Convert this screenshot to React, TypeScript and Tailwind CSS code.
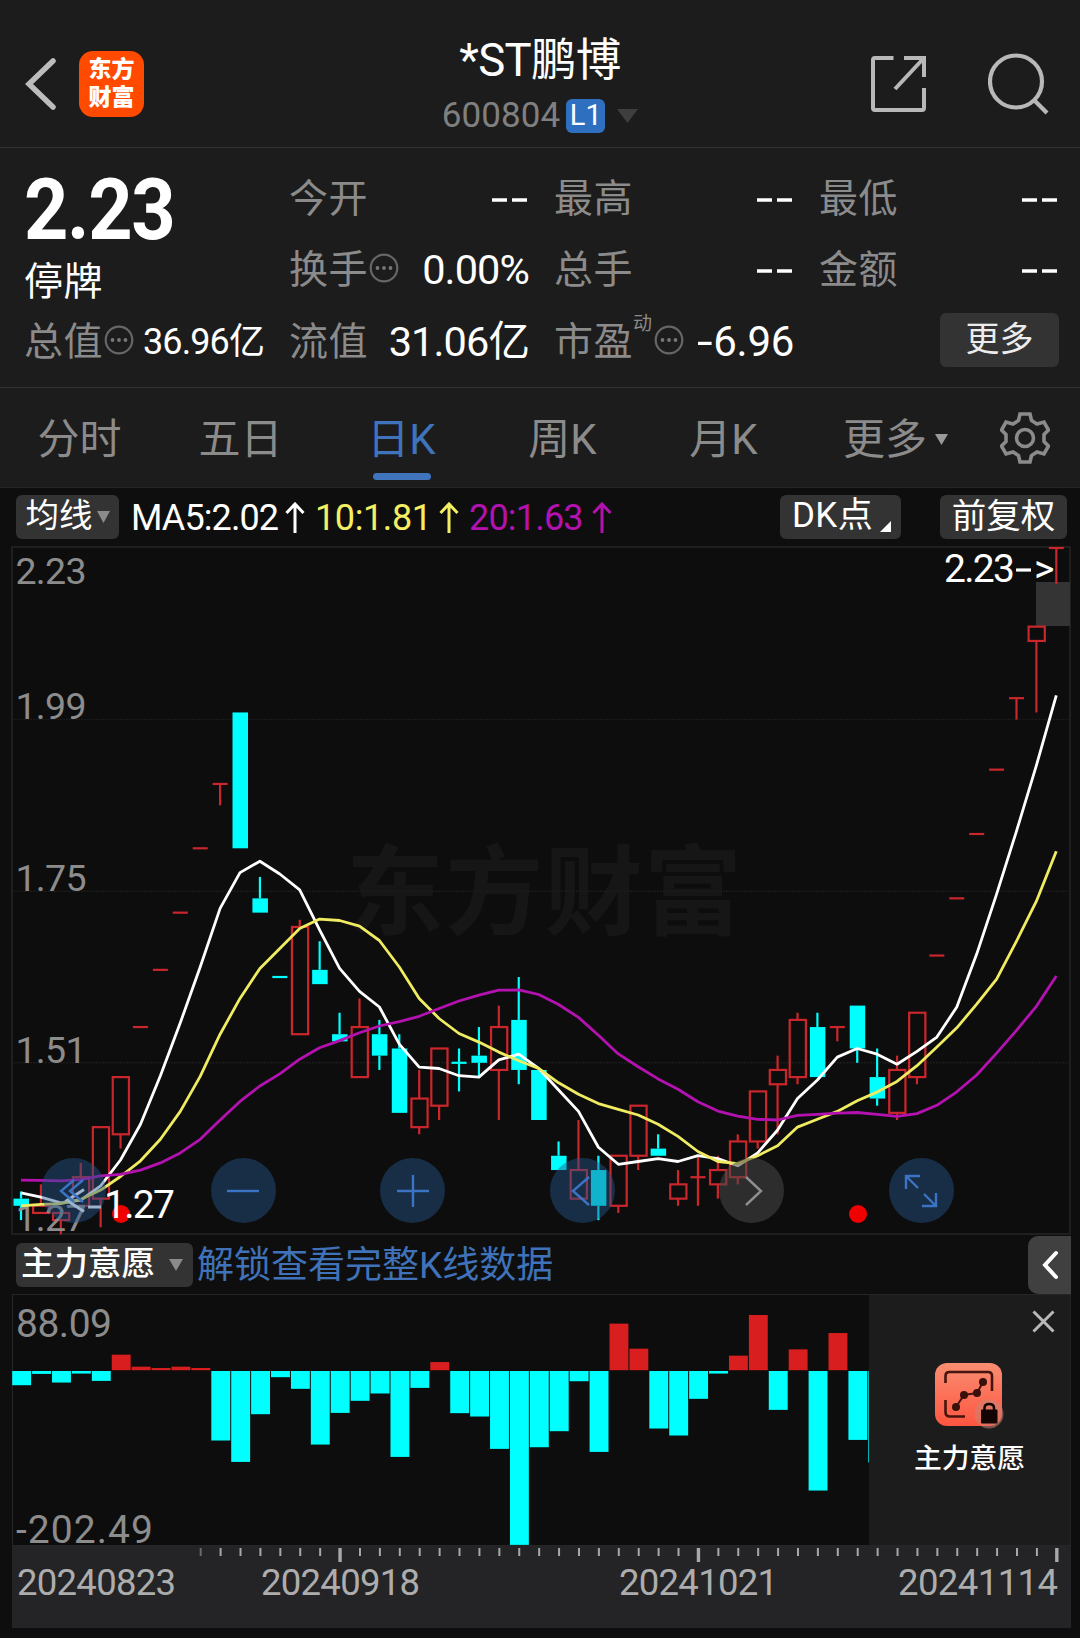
import type { ReactNode } from "react";

const RED = "#cb262c";
const CYAN = "#00ffff";

// closes before the first visible candle, needed by the moving averages
const history = [
  1.32, 1.31, 1.32, 1.31, 1.45, 1.44, 1.44, 1.44, 1.43, 1.36, 1.29, 1.29, 1.29,
  1.29, 1.3, 1.34, 1.34, 1.33, 1.32,
];

// [open, close, high, low]
const candles = [
  [1.32, 1.31, 1.33, 1.29],
  [1.3, 1.31, 1.34, 1.3],
  [1.29, 1.3, 1.3, 1.27],
  [1.31, 1.35, 1.37, 1.31],
  [1.32, 1.42, 1.42, 1.28],
  [1.41, 1.49, 1.49, 1.39],
  [1.56, 1.56, 1.56, 1.56],
  [1.64, 1.64, 1.64, 1.64],
  [1.72, 1.72, 1.72, 1.72],
  [1.81, 1.81, 1.81, 1.81],
  [1.9, 1.9, 1.9, 1.87],
  [2.0, 1.81, 2.0, 1.81],
  [1.74, 1.72, 1.77, 1.72],
  [1.63, 1.63, 1.63, 1.63],
  [1.55, 1.7, 1.71, 1.55],
  [1.64, 1.62, 1.68, 1.62],
  [1.55, 1.54, 1.58, 1.54],
  [1.49, 1.56, 1.6, 1.49],
  [1.55, 1.52, 1.57, 1.5],
  [1.53, 1.44, 1.55, 1.44],
  [1.42, 1.46, 1.5, 1.41],
  [1.45, 1.53, 1.53, 1.43],
  [1.51, 1.51, 1.53, 1.47],
  [1.52, 1.51, 1.56, 1.49],
  [1.5, 1.56, 1.59, 1.43],
  [1.57, 1.5, 1.63, 1.48],
  [1.5, 1.43, 1.5, 1.43],
  [1.38, 1.36, 1.4, 1.36],
  [1.32, 1.36, 1.43, 1.32],
  [1.36, 1.31, 1.38, 1.29],
  [1.31, 1.38, 1.38, 1.3],
  [1.38, 1.45, 1.45, 1.36],
  [1.39, 1.38, 1.41, 1.38],
  [1.32, 1.34, 1.36, 1.31],
  [1.35, 1.35, 1.38, 1.31],
  [1.34, 1.36, 1.38, 1.32],
  [1.35, 1.4, 1.41, 1.34],
  [1.4, 1.47, 1.47, 1.39],
  [1.48, 1.5, 1.52, 1.41],
  [1.49, 1.57, 1.58, 1.48],
  [1.56, 1.49, 1.58, 1.49],
  [1.56, 1.56, 1.56, 1.54],
  [1.59, 1.53, 1.59, 1.51],
  [1.49, 1.46, 1.53, 1.45],
  [1.44, 1.5, 1.52, 1.43],
  [1.49, 1.58, 1.58, 1.48],
  [1.66, 1.66, 1.66, 1.66],
  [1.74, 1.74, 1.74, 1.74],
  [1.83, 1.83, 1.83, 1.83],
  [1.92, 1.92, 1.92, 1.92],
  [2.02, 2.02, 2.02, 1.99],
  [2.1, 2.12, 2.12, 2.0],
  [2.23, 2.23, 2.23, 2.18],
];

const force = [
  -17.4, -4.3, -14.3, -3.9, -12.4, 18.9, 5, 3.5, 5, 3.5, -81.5, -106.3, -51,
  -8.1, -21.6, -86.2, -49.5, -35.5, -27, -100.5, -20.5, 10.4, -49.8, -53.7,
  -91.2, -202.49, -89.3, -70.7, -12.8, -94.7, 54.9, 25.9, -67.6, -75.7, -33.2,
  -3.9, 17.8, 64.9, -46, 25.1, -139.5, 44, -80.8, -107,
];

const STEP = 19.91;
const px = (i: number) => 9 + STEP * i;
const py = (price: number) => 1 + (2.23 - price) * 715;

const closes = [...history, ...candles.map((c) => c[1])];

function maPoints(n: number) {
  return candles
    .map((_, i) => {
      const end = i + history.length + 1;
      const sum = closes.slice(end - n, end).reduce((a, b) => a + b, 0);
      return `${px(i).toFixed(1)},${py(sum / n).toFixed(1)}`;
    })
    .join(" ");
}

function Candle({ i }: { i: number }) {
  const [open, close, high, low] = candles[i];
  const prev = closes[i + history.length - 1];
  const up = close === open ? close > prev : close > open;
  const color = up ? RED : CYAN;
  const x = px(i);
  const top = py(Math.max(open, close));
  const bottom = py(Math.min(open, close));

  return (
    <g stroke={color} strokeWidth={2.2} fill="none">
      {high > Math.max(open, close) && <path d={`M${x} ${py(high)}V${top}`} />}
      {low < Math.min(open, close) && <path d={`M${x} ${bottom}V${py(low)}`} />}
      {open === close ? (
        <path d={`M${x - 7.5} ${top}h15`} />
      ) : up ? (
        <rect x={x - 7.8} y={top} width={16.2} height={bottom - top} />
      ) : (
        <rect x={x - 7.5} y={top} width={15.5} height={bottom - top} fill={color} stroke="none" />
      )}
    </g>
  );
}

function CircleButton({ gray, children }: { gray?: boolean; children: ReactNode }) {
  return (
    <button
      className={`flex h-[65px] w-[65px] items-center justify-center rounded-full ${
        gray ? "bg-[#484848]/55" : "bg-[#26548c]/45"
      }`}
    >
      <svg
        width="40"
        height="40"
        viewBox="0 0 40 40"
        fill="none"
        stroke={gray ? "#8e8e8e" : "#3b74c4"}
        strokeWidth="2.4"
      >
        {children}
      </svg>
    </button>
  );
}

function KLineChart() {
  return (
    <div className="relative ml-3 h-[687px] w-[1058px]">
      <svg className="block overflow-visible" width="1058" height="687" viewBox="0 0 1058 687">
        <rect x="0" y="0" width="1058" height="687" fill="#0d0d0d" stroke="#262626" strokeWidth="1.5" />
        <text
          x="532"
          y="380"
          fontSize="98"
          fontWeight="700"
          textAnchor="middle"
          fill="#161616"
          textLength="396"
        >
          东方财富
        </text>
        {[1.99, 1.75, 1.51].map((p) => (
          <path key={p} d={`M0 ${py(p)}H1058`} stroke="#1b1b1b" strokeWidth="1.5" strokeDasharray="2 1" />
        ))}
        <rect x="1024" y="35" width="34" height="44" fill="#343434" />
        {candles.map((_, i) => (
          <Candle key={i} i={i} />
        ))}
        <g fill="#8c8c8c" fontSize="37.500">
          <text x="3.500" y="36.500" textLength="71">2.23</text>
          <text x="3.500" y="171.500" textLength="71">1.99</text>
          <text x="3.500" y="344" textLength="71">1.75</text>
          <text x="3.500" y="515.500" textLength="71">1.51</text>
          <text x="3.500" y="683.500" textLength="71">1.27</text>
        </g>
        <g fill="none" strokeWidth="2.8" strokeLinejoin="round">
          <polyline points={maPoints(5)} stroke="#ffffff" />
          <polyline points={maPoints(10)} stroke="#f0ec62" />
          <polyline points={maPoints(20)} stroke="#b412b0" />
        </g>
        <circle cx="109" cy="667" r="9" fill="#f00000" />
        <circle cx="846" cy="667" r="9" fill="#f00000" />
        <path d="M72 642.500L55 653.500L72 664.500M76 660H89" stroke="#fff" strokeWidth="3" fill="none" />
        <g fill="#ffffff" fontSize="39">
          <text x="92" y="671" textLength="71">1.27</text>
          <text x="932" y="35" textLength="71">2.23</text>
          <text x="1022" y="35">&gt;</text>
        </g>
        <path d="M1004 23H1019" stroke="#fff" strokeWidth="3.200" />
      </svg>
      <div className="absolute top-[611px] left-[29px] flex w-[913px] justify-between">
        <CircleButton>
          <path d="M20 9L7 20L20 31M29 9L16 20L29 31" />
        </CircleButton>
        <CircleButton>
          <path d="M4 20H36" />
        </CircleButton>
        <CircleButton>
          <path d="M4 20H36M20 4V36" />
        </CircleButton>
        <CircleButton>
          <path d="M27 6L11 20L27 34" />
        </CircleButton>
        <CircleButton gray>
          <path d="M14 6L29 20L14 34" />
        </CircleButton>
        <CircleButton>
          <path d="M5 18V5H19M5 5L17 17M35 22V35H21M35 35L23 23" />
        </CircleButton>
      </div>
    </div>
  );
}

function ForceChart() {
  const scale = 0.8627;
  const zero = 76;
  return (
    <svg className="block h-[250px] w-[856px] overflow-visible" viewBox="0 0 856 250">
      {force.map((v, i) => (
        <rect
          key={i}
          x={-0.8 + STEP * i}
          y={v > 0 ? zero - v * scale : zero}
          width={i === force.length - 1 ? 1.3 : 18.9}
          height={Math.abs(v) * scale - 0.8}
          fill={v > 0 ? "#d81e1e" : CYAN}
        />
      ))}
      <g fill="#8c8c8c" fontSize="39">
        <text x="3" y="42" textLength="96">88.09</text>
        <text x="3" y="248" textLength="137">-202.49</text>
      </g>
    </svg>
  );
}

function MoreDot() {
  return (
    <svg className="-mt-1 ml-px shrink-0" width="30" height="30" viewBox="0 0 30 30">
      <circle cx="15" cy="15" r="13.300" fill="none" stroke="#666" strokeWidth="2.200" />
      <g fill="#777">
        <circle cx="8.500" cy="15" r="1.900" />
        <circle cx="15" cy="15" r="1.900" />
        <circle cx="21.500" cy="15" r="1.900" />
      </g>
    </svg>
  );
}

function Quote({ label, value, dot }: { label: string; value: string; dot?: boolean }) {
  return (
    <div className="flex h-[71.5px] items-center">
      <span className="text-[39px] tracking-[0.5px] text-[#8b8b8b]">{label}</span>
      {dot && <MoreDot />}
      <span className="-mr-0.5 ml-auto text-[41.5px] tracking-[-0.9px] whitespace-nowrap text-white">{value}</span>
    </div>
  );
}

function Dashes() {
  return (
    <svg className="mt-0.5 -mr-px ml-auto" width="36" height="6" viewBox="0 0 36 6">
      <path d="M0 3H15M20 3H35" stroke="#fff" strokeWidth="3.600" />
    </svg>
  );
}

function EmptyQuote({ label }: { label: string }) {
  return (
    <div className="flex h-[71.5px] items-center">
      <span className="text-[39px] tracking-[0.5px] text-[#8b8b8b]">{label}</span>
      <Dashes />
    </div>
  );
}

function Triangle({ w, h, color }: { w: number; h: number; color: string }) {
  return (
    <svg className="shrink-0" width={w} height={h} viewBox="0 0 10 10" preserveAspectRatio="none">
      <path d="M0 0H10L5 10Z" fill={color} />
    </svg>
  );
}

function UpArrow({ color }: { color: string }) {
  return (
    <svg className="shrink-0" width="20" height="32" viewBox="0 0 20 32" fill="none" stroke={color} strokeWidth="3">
      <path d="M10 31V2M1.500 11L10 2L18.500 11" />
    </svg>
  );
}

function Header() {
  return (
    <header className="grid h-[148px] grid-cols-[1fr_auto_1fr] border-b border-[#333] bg-[#1c1c1c]">
      <div className="flex items-center pt-5 pl-[25px]">
        <svg width="32" height="54" viewBox="0 0 32 54" fill="none" stroke="#bcbcbc" strokeWidth="5.500" strokeLinecap="round">
          <path d="M28 4L4 27L28 50" />
        </svg>
        <div className="ml-[22px] flex h-[66px] w-[65px] flex-col items-center justify-center rounded-[14px] bg-[#ff4a00] text-[23px] leading-[28px] font-black text-white">
          <span>东方</span>
          <span>财富</span>
        </div>
      </div>
      <div className="flex flex-col items-center pt-[33px]">
        <h1 className="h-[54px] text-[45.5px] leading-[56px] tracking-[-0.7px] text-white">*ST鹏博</h1>
        <div className="flex h-[58px] items-center">
          <span className="text-[35px] tracking-[0.1px] text-[#808080]">600804</span>
          <span className="ml-1.5 flex h-[34px] w-[39px] items-center justify-center rounded-[6px] bg-[#2e6fc0] text-[29px] text-white">
            L1
          </span>
          <span className="ml-3">
            <Triangle w={21} h={14} color="#3e3e3e" />
          </span>
        </div>
      </div>
      <div className="flex items-center justify-end gap-[61px] pt-5 pr-[31px]">
        <svg width="57" height="58" viewBox="0 0 57 58" fill="none" stroke="#b8b8b8" strokeWidth="4">
          <path d="M23.500 3H5Q3 3 3 5V53Q3 55 5 55H52Q54 55 54 53V33M34 3H54V22M53 4L25 34" />
        </svg>
        <svg width="61" height="62" viewBox="0 0 61 62" fill="none" stroke="#b8b8b8" strokeWidth="4.200">
          <circle cx="28" cy="28.500" r="26" />
          <path d="M46 47L59 60" />
        </svg>
      </div>
    </header>
  );
}

function QuotePanel() {
  return (
    <section className="grid h-[240px] grid-cols-4 gap-x-[27px] border-b border-[#333] bg-[#1c1c1c] pt-[15px] pr-[23px] pl-[24px]">
      <div>
        <div className="h-[95px] origin-left scale-x-90 text-[86px] leading-[94px] font-bold tracking-[-1.5px] text-white">
          2.23
        </div>
        <div className="h-[48px] text-[39px] leading-[48px] tracking-[0.5px] text-white">停牌</div>
        <div className="flex h-[71.5px] items-center">
          <span className="text-[39px] tracking-[0.5px] text-[#8b8b8b]">总值</span>
          <MoreDot />
          <span className="-mr-0.5 ml-auto text-[36px] tracking-[-0.9px] whitespace-nowrap text-white">36.96亿</span>
        </div>
      </div>
      <div>
        <EmptyQuote label="今开" />
        <Quote label="换手" value="0.00%" dot />
        <Quote label="流值" value="31.06亿" />
      </div>
      <div>
        <EmptyQuote label="最高" />
        <EmptyQuote label="总手" />
        <div className="flex h-[71.5px] items-center">
          <span className="text-[39px] tracking-[0.5px] text-[#8b8b8b]">市盈</span>
          <span className="mr-px self-start pt-[4px] text-[19px] text-[#8b8b8b]">动</span>
          <MoreDot />
          <span className="-mr-0.5 ml-auto flex items-center text-[42px] tracking-[-0.3px] text-white">
            <span className="mr-[3px] inline-block scale-x-135">-</span>6.96
          </span>
        </div>
      </div>
      <div>
        <EmptyQuote label="最低" />
        <EmptyQuote label="金额" />
        <div className="flex h-[71.5px] items-center justify-end pb-1">
          <button className="-mr-0.5 h-[54px] w-[119px] rounded-[6px] bg-[#333] text-[34px] text-[#ececec]">更多</button>
        </div>
      </div>
    </section>
  );
}

const tabs = ["分时", "五日", "日K", "周K", "月K", "更多"];

function Tabs() {
  return (
    <nav className="flex h-[100px] items-center border-b border-[#262626] bg-[#1c1c1c] text-[42px] text-[#8b8b8b]">
      {tabs.map((t) => (
        <div key={t} className={`flex h-full flex-col items-center pr-0.5 ${t === "更多" ? "w-[183px]" : "w-[161px]"}`}>
          <div className={`flex h-[85px] items-center pt-[18px] ${t === "日K" ? "text-[#3f74bd]" : ""}`}>
            {t}
            {t === "更多" && (
              <span className="ml-2">
                <Triangle w={13} h={11} color="#9a9a9a" />
              </span>
            )}
          </div>
          {t === "日K" && <div className="h-[7px] w-[58px] rounded-full bg-[#3f74bd]" />}
        </div>
      ))}
      <svg className="ml-3" width="50" height="52" viewBox="0 0 50 52" fill="none" stroke="#8b8b8b" strokeWidth="3.600">
        <path d="M20 2H30L31.500 8.500L37 12L44 10L48.500 18L44 22.500V29.500L48.500 34L44 42L37 40L31.500 43.500L30 50H20L18.500 43.500L13 40L6 42L1.500 34L6 29.500V22.500L1.500 18L6 10L13 12L18.500 8.500Z" />
        <circle cx="25" cy="26" r="8.500" />
      </svg>
    </nav>
  );
}

function IndicatorBar() {
  return (
    <div className="flex h-[59px] items-center pr-[13px] pb-0.5 pl-4 text-[36px]">
      <button className="flex h-[44px] w-[103px] items-center justify-center gap-1 rounded-[6px] bg-[#333] text-[33.5px] text-white">
        均线
        <Triangle w={13} h={12} color="#8b8b8b" />
      </button>
      <div className="ml-3 flex w-[174px] items-center justify-between pt-0.5 text-white">
        <span className="tracking-[-0.9px]">MA5:2.02</span>
        <UpArrow color="#ffffff" />
      </div>
      <div className="ml-2.5 flex w-[144px] items-center justify-between pt-0.5 text-[#f3ee62]">
        <span className="tracking-[-0.4px]">10:1.81</span>
        <UpArrow color="#f3ee62" />
      </div>
      <div className="ml-2.5 flex w-[143px] items-center justify-between pt-0.5 text-[#b412b0]">
        <span className="tracking-[-0.8px]">20:1.63</span>
        <UpArrow color="#b412b0" />
      </div>
      <button className="ml-auto flex h-[44px] w-[121px] items-center rounded-[6px] bg-[#333] pl-3 text-[35px] tracking-[0.4px] text-white">
        DK点
        <svg className="mt-5 ml-[7px]" width="11" height="11" viewBox="0 0 11 11">
          <path d="M11 0V11H0Z" fill="#fff" />
        </svg>
      </button>
      <button className="ml-[39px] h-[44px] w-[127px] rounded-[6px] bg-[#333] text-[34.5px] leading-[40px] text-white">
        <span className="block pb-0.5">前复权</span>
      </button>
    </div>
  );
}

function LockPanel() {
  return (
    <aside className="relative flex grow flex-col items-center bg-[#1c1c1c] pt-[67px]">
      <svg className="absolute top-[15px] right-[15px]" width="23" height="23" viewBox="0 0 23 23" stroke="#b8b8b8" strokeWidth="3">
        <path d="M1.500 1.500L21.500 21.500M21.500 1.500L1.500 21.500" />
      </svg>
      <svg width="70" height="68" viewBox="0 0 70 68" fill="none">
        <defs>
          <linearGradient id="lock-bg" x1="0" y1="0" x2="0" y2="1">
            <stop offset="0" stopColor="#f98e72" />
            <stop offset="1" stopColor="#ff5540" />
          </linearGradient>
        </defs>
        <rect x="0" y="1" width="67" height="63" rx="12" fill="url(#lock-bg)" />
        <path
          d="M10.500 21V14Q10.500 10 14.500 10H53Q57 10 57 14V29M10.500 38V50Q10.500 54.500 15 54.500H30"
          stroke="#45140e"
          strokeWidth="2.600"
        />
        <path d="M21 45L29 33L42 31L48 20" stroke="#45140e" strokeWidth="2" />
        <g fill="#3a100b">
          <circle cx="21" cy="45" r="4" />
          <circle cx="29" cy="33" r="4" />
          <circle cx="42" cy="31" r="4" />
          <circle cx="48" cy="20" r="4" />
        </g>
        <circle cx="54" cy="52" r="14.500" fill="#c98474" fillOpacity="0.55" />
        <rect x="46" y="47.500" width="16.500" height="14" rx="1" fill="#120504" />
        <path d="M49.500 48V46Q49.500 42 54.200 42Q59 42 59 46V48" stroke="#120504" strokeWidth="2.500" />
      </svg>
      <span className="mt-[9px] text-[27.8px] leading-[40px] font-medium text-white">主力意愿</span>
    </aside>
  );
}

function ForcePanel() {
  return (
    <section>
      <div className="flex h-[60px] items-center pt-px pr-[9px] pl-4">
        <button className="flex h-[44px] w-[177px] items-center rounded-[6px] bg-[#333] pl-[5px] text-[33.5px] font-medium text-white">
          主力意愿
          <span className="ml-3.5">
            <Triangle w={14} h={12} color="#8b8b8b" />
          </span>
        </button>
        <a className="ml-1 pt-0.5 text-[37px] text-[#3f72b8]">解锁查看完整K线数据</a>
        <button className="ml-auto flex h-[58px] w-[43px] items-center justify-center rounded-l-[10px] bg-[#404040]">
          <svg width="18" height="30" viewBox="0 0 18 30" fill="none" stroke="#fff" strokeWidth="4" strokeLinecap="round">
            <path d="M15 3L4 15L15 27" />
          </svg>
        </button>
      </div>
      <div className="ml-3 flex h-[252px] w-[1059px] border border-[#262626] bg-[#0d0d0d]">
        <ForceChart />
        <LockPanel />
      </div>
    </section>
  );
}

function DateAxis() {
  return (
    <footer className="ml-3 h-[82px] w-[1059px] bg-[#242426]">
      <svg className="block" width="1059" height="82" viewBox="0 0 1059 82">
        {candles.map((_, i) => {
          if (i < 9) return null;
          const major = i === 16 || i === 34 || i === 52;
          return (
            <path
              key={i}
              d={`M${px(i) + 0.5} 2V${major ? 16 : 10}`}
              stroke={i === 9 ? "#6a6a6a" : "#a8a8a8"}
              strokeWidth={major ? 3.4 : 2}
            />
          );
        })}
        <g fill="#adadad" fontSize="36.500">
          <text x="5" y="49" textLength="159">20240823</text>
          <text x="249" y="49" textLength="159">20240918</text>
          <text x="607" y="49" textLength="159">20241021</text>
          <text x="886" y="49" textLength="160">20241114</text>
        </g>
      </svg>
    </footer>
  );
}

export default function App() {
  return (
    <div className="h-[1638px] w-[1080px] overflow-hidden bg-[#0e0e0e] font-[Roboto,'Noto_Sans_CJK_SC',sans-serif]">
      <Header />
      <QuotePanel />
      <Tabs />
      <IndicatorBar />
      <KLineChart />
      <ForcePanel />
      <DateAxis />
    </div>
  );
}
